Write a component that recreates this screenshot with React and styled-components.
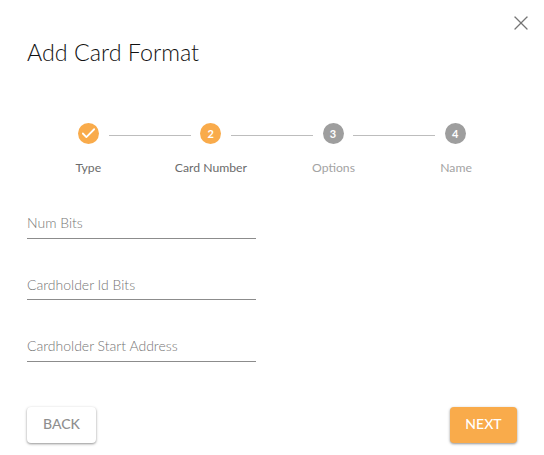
import React from "react";
import styled, { createGlobalStyle } from "styled-components";
import { X, Check } from "lucide-react";

const STEPS = [
  { label: "Type", done: true, active: true },
  { label: "Card Number", active: true },
  { label: "Options" },
  { label: "Name" },
];

const FIELDS = ["Num Bits", "Cardholder Id Bits", "Cardholder Start Address"];

const GlobalStyle = createGlobalStyle`
  html, body {
    margin: 0;
    background: #fff;
    font-family: Lato, "Open Sans", sans-serif;
  }
`;

const Dialog = styled.div`
  width: 544px;
  height: 455px;
  box-sizing: border-box;
  padding: 0 27px;
  position: relative;
  overflow: hidden;
`;

const CloseButton = styled.button`
  position: absolute;
  top: 11px;
  right: 11px;
  width: 24px;
  height: 24px;
  padding: 0;
  border: none;
  background: none;
  color: #757575;
  display: flex;
  align-items: center;
  justify-content: center;
`;

const Title = styled.h2`
  margin: 0;
  padding-top: 38px;
  font-size: 23.3px;
  line-height: 28px;
  font-weight: 300;
  color: #111;
`;

const Track = styled.div`
  display: flex;
  align-items: center;
  margin-top: 57px;
  padding: 0 51.2px 0 51px;
`;

const Circle = styled.div`
  width: 21px;
  height: 21px;
  flex: none;
  border-radius: 50%;
  background: ${(p) => (p.$active ? "#f9ab4b" : "#9e9e9e")};
  color: #fff;
  font-size: 11px;
  font-weight: 700;
  display: flex;
  align-items: center;
  justify-content: center;
`;

const Connector = styled.div`
  flex: 1;
  height: 1px;
  margin: 3px 9.5px 0;
  background: #bdbdbd;
`;

const Labels = styled.div`
  display: grid;
  grid-template-columns: repeat(4, 122.6px);
  margin-top: 16px;
`;

const StepLabel = styled.div`
  text-align: center;
  font-size: 12.2px;
  line-height: 16px;
  color: ${(p) => (p.$active ? "#6b6b6b" : "#a3a3a3")};
`;

const Fields = styled.div`
  display: flex;
  flex-direction: column;
  gap: 30.4px;
  margin-top: 32px;
  width: 229px;
`;

const Field = styled.div`
  height: 31px;
  box-sizing: border-box;
  padding-top: 6.2px;
  border-bottom: 1px solid #8c8c8c;
  font-size: 14px;
  line-height: 18px;
  font-weight: 300;
  color: #757575;
`;

const Actions = styled.div`
  display: flex;
  justify-content: space-between;
  margin-top: 45.2px;
`;

const Button = styled.button`
  height: 36px;
  border: none;
  border-radius: 4px;
  padding: 0 0 3px;
  font-family: inherit;
  font-size: 14px;
  font-weight: 500;
  box-shadow: 0 1px 3px rgba(0, 0, 0, 0.3), 0 1px 2px rgba(0, 0, 0, 0.16);
  width: ${(p) => (p.$primary ? "67px" : "69px")};
  background: ${(p) => (p.$primary ? "#f9ab4b" : "#fff")};
  color: ${(p) => (p.$primary ? "#fff" : "#8f8f8f")};
`;

export default function App() {
  return (
    <Dialog>
      <GlobalStyle />
      <CloseButton aria-label="Close">
        <X size={24} strokeWidth={1.3} />
      </CloseButton>
      <Title>Add Card Format</Title>
      <Track>
        {STEPS.map((step, i) => (
          <React.Fragment key={step.label}>
            {i > 0 && <Connector />}
            <Circle $active={step.active}>
              {step.done ? <Check size={17} strokeWidth={2.5} /> : i + 1}
            </Circle>
          </React.Fragment>
        ))}
      </Track>
      <Labels>
        {STEPS.map((step) => (
          <StepLabel key={step.label} $active={step.active}>
            {step.label}
          </StepLabel>
        ))}
      </Labels>
      <Fields>
        {FIELDS.map((name) => (
          <Field key={name}>{name}</Field>
        ))}
      </Fields>
      <Actions>
        <Button>BACK</Button>
        <Button $primary>NEXT</Button>
      </Actions>
    </Dialog>
  );
}
